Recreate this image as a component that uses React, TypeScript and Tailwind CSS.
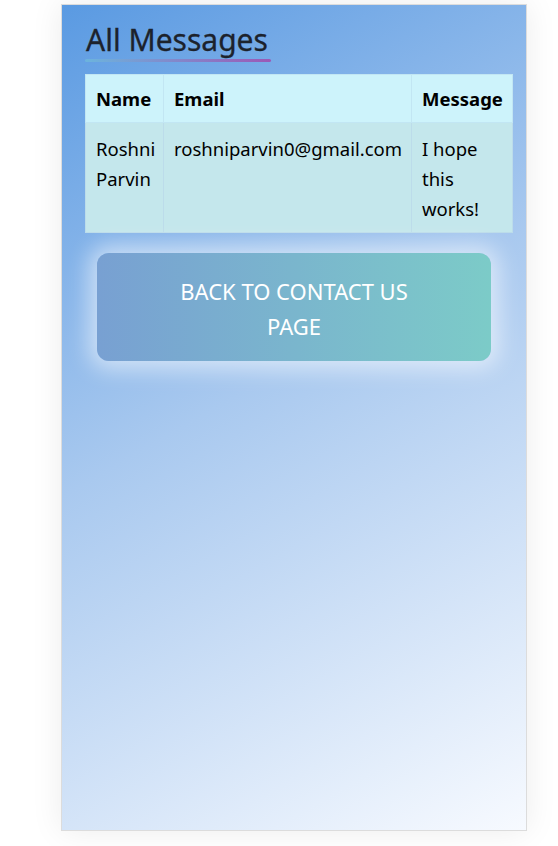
import React from "react";

export default function App() {
  return (
    <div className="min-h-[846px] bg-white pt-[4px] pl-[61px]" style={{ fontFamily: '"Noto Sans", "Open Sans", sans-serif' }}>
      <div className="w-[466px] h-[827px] border border-[#dcdcdc] bg-[linear-gradient(150deg,#5a9ae2_0%,#a9c9ef_45%,#f7faff_100%)] shadow-[0_0_30px_rgba(0,0,0,0.08)] pl-[23px] pt-[16px]">
        <div className="inline-flex flex-col">
          <h1 className="text-[30px] leading-[38px] text-[#1c222c] px-[1px] [-webkit-text-stroke:0.3px_#1c222c]">All Messages</h1>
          <div className="h-[3px] w-[186px] rounded-full bg-[linear-gradient(90deg,#6cb4dd,#9b59b6)]" />
        </div>
        <table className="mt-[12px] w-[428px] border-collapse text-[18.5px] text-black">
          <thead>
            <tr className="bg-[#cdf3fb] h-[48px]">
              <th className="w-[78px] border border-[#c2e6f3] text-left font-bold pl-[10px]">Name</th>
              <th className="w-[248px] border border-[#c2e6f3] text-left font-bold pl-[10px]">Email</th>
              <th className="border border-[#c2e6f3] text-left font-bold pl-[10px]">Message</th>
            </tr>
          </thead>
          <tbody>
            <tr className="bg-[#c4e7ec] align-top">
              <td className="border border-[#bcdcea] pl-[10px] pt-[11px] pb-[8px] leading-[30px]">Roshni Parvin</td>
              <td className="border border-[#bcdcea] pl-[10px] pt-[11px] pb-[8px] leading-[30px]">roshniparvin0@gmail.com</td>
              <td className="border border-[#bcdcea] pl-[10px] pr-[10px] pt-[11px] pb-[8px] leading-[30px]">I hope this works!</td>
            </tr>
          </tbody>
        </table>
        <div className="mt-[20px] ml-[12px] w-[394px] h-[108px] rounded-[12px] bg-[linear-gradient(90deg,#78a0d2,#7ccbc8)] shadow-[0_0_22px_8px_rgba(255,255,255,0.55)] flex items-center justify-center">
          <span className="mt-[4px] text-white text-[22px] leading-[35px] text-center w-[260px]">BACK TO CONTACT US PAGE</span>
        </div>
      </div>
    </div>
  );
}
